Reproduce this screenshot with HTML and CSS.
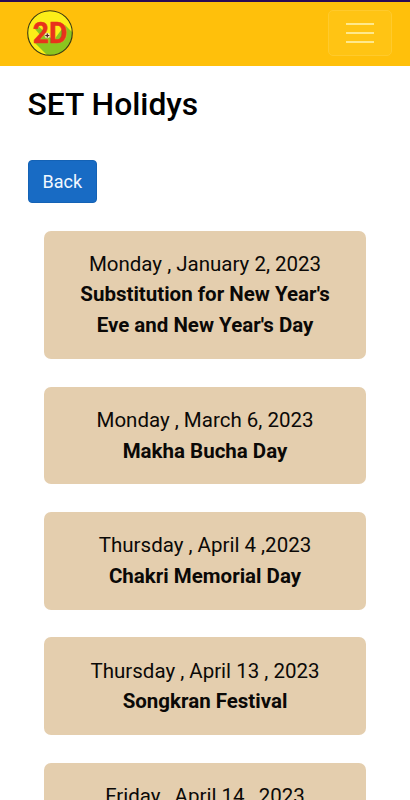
FILE: index.html
```html
<!DOCTYPE html>
<html lang="en">
<head>
<meta charset="utf-8">
<meta name="viewport" content="width=device-width, initial-scale=1">
<title>SET Holidys</title>
<link rel="stylesheet" href="styles.css">
</head>
<body>
<header class="navbar">
  <svg class="logo" viewBox="0 0 46 46" role="img" aria-label="2D">
    <defs><clipPath id="disc"><circle cx="23" cy="23" r="22.3"/></clipPath></defs>
    <circle cx="23" cy="23" r="22.3" fill="#fcee18"/>
    <path clip-path="url(#disc)" d="M7 32L21 46H46V23L38 15L26 31L23 27L10 15L8 19L14 26Z" fill="#8bc51f"/>
    <circle cx="23" cy="23" r="22.3" fill="none" stroke="#3b3a12" stroke-width="1.1"/>
    <text class="logo-text" x="23" y="33" text-anchor="middle" textLength="34.5" lengthAdjust="spacingAndGlyphs">2D</text>
    <circle cx="20.3" cy="25.5" r="2.7" fill="#f5ddb8"/>
    <path d="M20.3 23.5v4M18.3 25.5h4" stroke="#4b2424" stroke-width="1.2"/>
  </svg>
  <button class="toggler" aria-label="Menu">
    <svg viewBox="0 0 28 22"><path d="M0 2h28M0 11h28M0 20h28"/></svg>
  </button>
</header>
<main class="content">
  <h1 class="title">SET Holidys</h1>
  <button class="back">Back</button>
  <div class="cards">
    <div class="card">Monday , January 2, 2023<br><b>Substitution for New Year's<br>Eve and New Year's Day</b></div>
    <div class="card">Monday , March 6, 2023<br><b>Makha Bucha Day</b></div>
    <div class="card">Thursday , April 4 ,2023<br><b>Chakri Memorial Day</b></div>
    <div class="card">Thursday , April 13 , 2023<br><b>Songkran Festival</b></div>
    <div class="card">Friday , April 14 , 2023</div>
  </div>
</main>
</body>
</html>
```
FILE: styles.css
```css
* {
  box-sizing: border-box;
}

body {
  margin: 0;
  height: 800px;
  overflow: hidden;
  background: #fff;
  color: #0b0907;
  font-family: Roboto, sans-serif;
}

.navbar {
  display: flex;
  justify-content: space-between;
  align-items: center;
  height: 65.5px;
  padding: 0 18px 1px 27px;
  border-top: 2px solid #2a0a55;
  background: #ffc00b;
}

.logo {
  width: 46px;
  height: 46px;
}

.logo-text {
  font: 700 29px Roboto, sans-serif;
  fill: #e8321c;
  stroke: #e8321c;
  stroke-width: 0.5;
}

.toggler {
  display: flex;
  align-items: center;
  justify-content: center;
  width: 64px;
  height: 46px;
  padding: 0;
  border: 1px solid #ffca2c;
  border-radius: 5px;
  background: #ffc414;
}

.toggler svg {
  width: 28px;
  height: 22px;
  fill: none;
  stroke: #ffe98c;
  stroke-width: 2;
}

.content {
  padding: 19px 27.5px 0;
}

.title {
  margin: 0 0 36px;
  font-size: 31.8px;
  font-weight: 500;
  line-height: 39px;
  color: #000;
}

.back {
  display: block;
  width: 69.5px;
  height: 43px;
  margin-bottom: 28px;
  padding: 0;
  border: 1px solid #1462b5;
  border-radius: 4px;
  background: #186bc4;
  color: #f2f8ff;
  font: 400 18px Roboto, sans-serif;
}

.cards {
  display: flex;
  flex-direction: column;
  gap: 27.6px;
  padding: 0 16.8px;
}

.card {
  padding: 18.1px 0;
  border-radius: 7px;
  background: #e4ceae;
  font-size: 20.5px;
  line-height: 30.8px;
  text-align: center;
  white-space: nowrap;
}
```
